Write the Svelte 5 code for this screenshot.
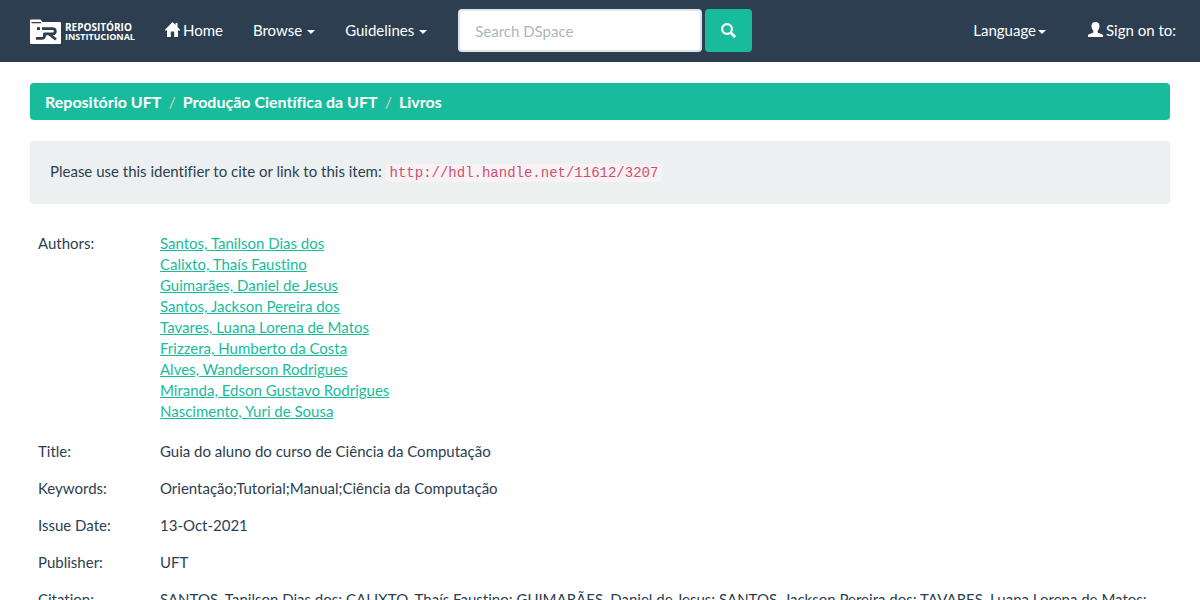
<script>
  const crumbs = ['Repositório UFT', 'Produção Científica da UFT', 'Livros'];
  const authors = [
    'Santos, Tanilson Dias dos',
    'Calixto, Thaís Faustino',
    'Guimarães, Daniel de Jesus',
    'Santos, Jackson Pereira dos',
    'Tavares, Luana Lorena de Matos',
    'Frizzera, Humberto da Costa',
    'Alves, Wanderson Rodrigues',
    'Miranda, Edson Gustavo Rodrigues',
    'Nascimento, Yuri de Sousa'
  ];
  const fields = [
    ['Title:', 'Guia do aluno do curso de Ciência da Computação'],
    ['Keywords:', 'Orientação;Tutorial;Manual;Ciência da Computação'],
    ['Issue Date:', '13-Oct-2021'],
    ['Publisher:', 'UFT'],
    ['Citation:', 'SANTOS, Tanilson Dias dos; CALIXTO, Thaís Faustino; GUIMARÃES, Daniel de Jesus; SANTOS, Jackson Pereira dos; TAVARES, Luana Lorena de Matos;']
  ];
</script>

<header class="navbar">
  <div class="container bar">
    <a class="brand" href="#top" aria-label="Repositório Institucional">
      <svg width="31" height="25" viewBox="0 0 31 25" aria-hidden="true">
        <path fill="#fff" d="M0 1.5Q0 .5 1 .5H10.5L12.5 3H30Q31 3 31 4V24Q31 25 30 25H1Q0 25 0 24Z" />
        <path fill="#2c3e50" d="M1.5 3H10.5L11.7 4.3H1.5Z" />
        <path fill="none" stroke="#2c3e50" stroke-width="2.8" stroke-linejoin="round" d="M6 19.3H11.5Q14.5 19.3 14.5 17V14.8H22.5Q25.3 14.8 25.3 12.2T22.5 9.6H12M19 15L26 20.5" />
        <path fill="#2c3e50" d="M7 8.2H10V11H7Z" />
      </svg>
      <span class="wordmark"><span class="line-a">REPOSITÓRIO</span><span class="line-b">INSTITUCIONAL</span></span>
    </a>
    <nav class="links">
      <a href="#home">
        <svg width="15" height="15" viewBox="0 0 15 15" aria-hidden="true"><path fill="#fff" d="M7.5 0L10.5 3V1H12.5V5L15 7.8V8.5H13V15H9.2V9.5H5.8V15H2V8.5H0V7.8Z" /></svg>
        Home
      </a>
      <a href="#browse">Browse <span class="caret spaced"></span></a>
      <a href="#guidelines">Guidelines <span class="caret spaced"></span></a>
    </nav>
    <form class="search" onsubmit={(e) => e.preventDefault()}>
      <input type="search" placeholder="Search DSpace" aria-label="Search DSpace" />
      <button type="submit" aria-label="Search">
        <svg width="15" height="15" viewBox="0 0 15 15" aria-hidden="true"><circle cx="6" cy="6" r="4.9" fill="none" stroke="#fff" stroke-width="2.1" /><path stroke="#fff" stroke-width="2.8" d="M9.3 9.3L14.1 14.1" /></svg>
      </button>
    </form>
    <nav class="links account">
      <a href="#language">Language<span class="caret"></span></a>
      <a class="sign" href="#sign-on">
        <svg width="15" height="15" viewBox="0 0 15 15" aria-hidden="true"><path fill="#fff" d="M7.5 0C10.2 0 11.5 1.5 11.5 4C11.5 6 10.8 7.6 9.7 8.6V10C9.7 10.6 10 10.9 10.6 11.1L14 12.3Q15 12.7 15 13.8V15H0V13.8Q0 12.7 1 12.3L4.4 11.1C5 10.9 5.3 10.6 5.3 10V8.6C4.2 7.6 3.5 6 3.5 4C3.5 1.5 4.8 0 7.5 0Z" /></svg>
        Sign on to:
      </a>
    </nav>
  </div>
</header>

<main class="container">
  <ol class="breadcrumb">
    {#each crumbs as crumb}
      <li><a href="#collection">{crumb}</a></li>
    {/each}
  </ol>

  <div class="well">
    Please use this identifier to cite or link to this item:
    <code>http://hdl.handle.net/11612/3207</code>
  </div>

  <table>
    <tbody>
      <tr class="authors">
        <th scope="row">Authors:</th>
        <td>
          {#each authors as author}
            <a href="#author">{author}</a><br />
          {/each}
        </td>
      </tr>
      {#each fields as [label, value]}
        <tr><th scope="row">{label}</th><td>{value}</td></tr>
      {/each}
    </tbody>
  </table>
</main>

<style>
  :global(body) {
    margin: 0;
    background: #fff;
    color: #2c3e50;
    font: 15px/21px Lato, sans-serif;
    font-variant-ligatures: no-common-ligatures;
  }
  .container {
    box-sizing: border-box;
    max-width: 1170px;
    margin: 0 auto;
    padding: 0 15px;
  }
  .navbar {
    background: #2c3e50;
    margin-bottom: 21px;
  }
  .bar {
    display: flex;
    align-items: center;
    min-height: 62px;
    padding-right: 9px;
    padding-bottom: 1px;
  }
  .brand {
    display: flex;
    align-items: center;
    gap: 4px;
    margin-right: 15px;
    padding-top: 2px;
    color: #fff;
    text-decoration: none;
  }
  .wordmark {
    display: flex;
    flex-direction: column;
    min-width: 68px;
    font-family: "Open Sans", sans-serif;
    font-weight: 700;
    line-height: 10px;
    white-space: nowrap;
  }
  .line-a { font-size: 10px; }
  .line-b { font-size: 9px; }
  .links {
    display: flex;
    align-items: center;
  }
  .links a {
    display: flex;
    align-items: center;
    gap: 3px;
    padding: 0 15px;
    color: #fff;
    text-decoration: none;
    white-space: nowrap;
  }
  .links svg {
    margin-bottom: 2px;
  }
  .caret {
    border-top: 4px solid #fff;
    border-left: 4px solid transparent;
    border-right: 4px solid transparent;
    margin-left: -1px;
    margin-top: 2px;
  }
  .caret.spaced {
    margin-left: 2px;
  }
  .search {
    display: flex;
    gap: 3px;
    margin-left: 16px;
  }
  .search input {
    box-sizing: border-box;
    width: 244px;
    height: 43px;
    margin: 0;
    padding: 0 15px;
    border: 2px solid #dce4ec;
    border-radius: 4px;
    background: #fff;
    color: #2c3e50;
    font: inherit;
    appearance: none;
  }
  .search input::placeholder {
    color: #acb6c0;
    opacity: 1;
  }
  .search button {
    display: grid;
    place-items: center;
    width: 47px;
    height: 43px;
    padding: 0;
    border: 0;
    border-radius: 4px;
    background: #18bc9c;
  }
  .account {
    gap: 12px;
    margin-left: auto;
  }
  .account .sign {
    padding-right: 0;
  }
  .breadcrumb {
    display: flex;
    flex-wrap: wrap;
    margin: 0 0 21px;
    padding: 8px 15px;
    border-radius: 4px;
    background: #18bc9c;
    font-size: 16px;
    list-style: none;
  }
  .breadcrumb li + li::before {
    content: "/";
    padding: 0 7px;
    color: #ccc;
  }
  .breadcrumb a {
    color: #fff;
    font-weight: 700;
    text-decoration: none;
  }
  .well {
    padding: 20px 20px 22px;
    margin-bottom: 21px;
    border-radius: 4px;
    background: #ecf0f1;
  }
  code {
    padding: 1px 4px;
    border-radius: 4px;
    background: #f9f2f4;
    color: #d0506f;
    font: 14px/14px "Liberation Mono", monospace;
  }
  table {
    width: 100%;
    border-collapse: collapse;
  }
  th, td {
    padding: 8px;
    text-align: left;
    vertical-align: top;
    font-weight: 400;
  }
  th {
    width: 106px;
    white-space: nowrap;
  }
  td a {
    color: #18bc9c;
    text-decoration: underline;
  }
  .authors td {
    padding-bottom: 11px;
  }
</style>
